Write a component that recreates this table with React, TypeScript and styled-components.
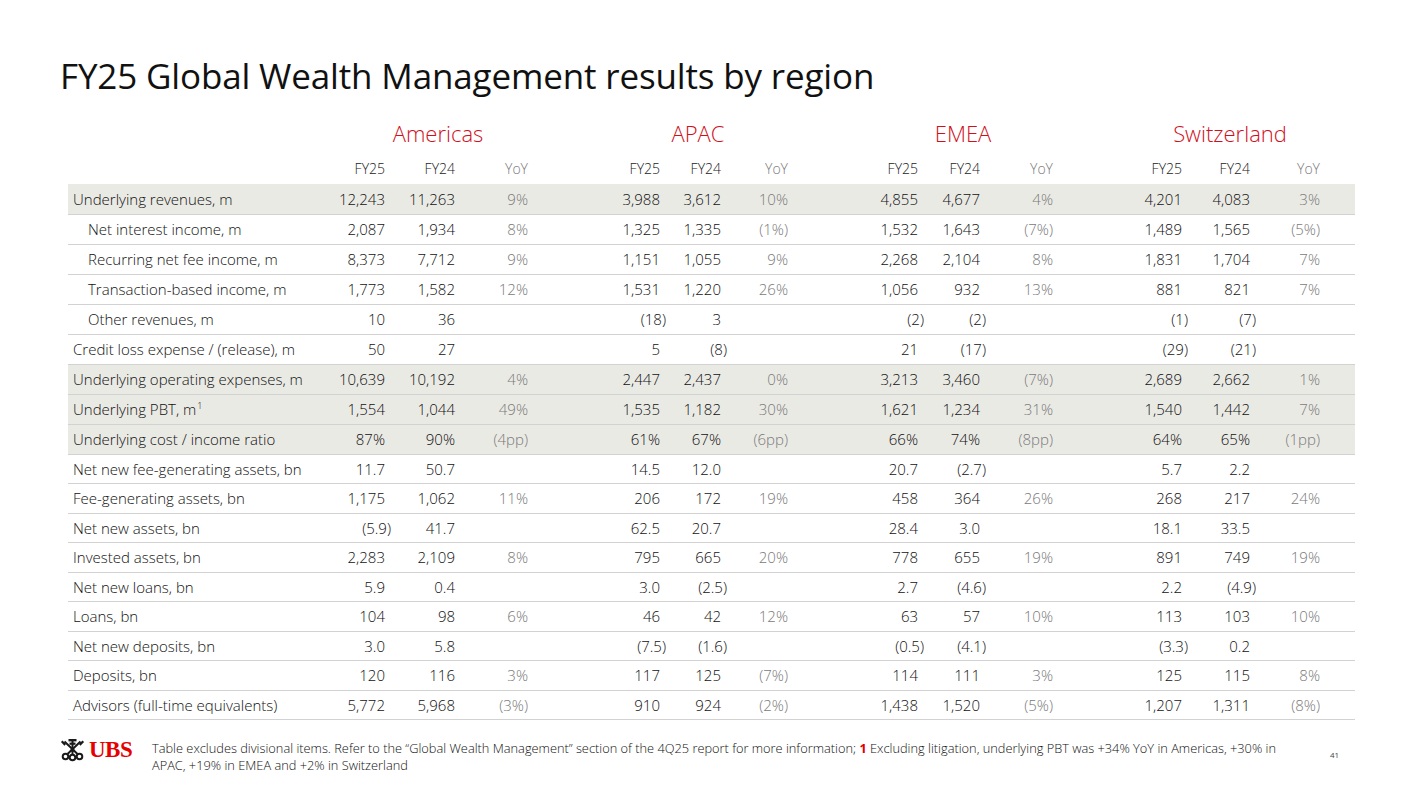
import styled, { createGlobalStyle } from "styled-components";

const GlobalStyle = createGlobalStyle`
  html, body {
    margin: 0;
    padding: 0;
    background: #ffffff;
  }
  body {
    font-family: "Open Sans", "Noto Sans", Arial, sans-serif;
    color: #1a1a1a;
  }
`;

const Page = styled.div`
  width: 1407px;
  height: 792px;
  box-sizing: border-box;
  padding: 54px 52px 0 60px;
  display: flex;
  flex-direction: column;
  overflow: hidden;
`;

const Title = styled.h1`
  margin: 0 0 20px 0;
  font-size: 35px;
  line-height: 44px;
  font-weight: 400;
  color: #111;
  letter-spacing: -0.15px;
`;

const Table = styled.table`
  margin-left: 8px;
  width: 1287px;
  border-collapse: collapse;
  table-layout: fixed;
  font-size: 15px;
  font-weight: 300;
`;

const RegionCell = styled.th`
  height: 28px;
  padding: 0 0 4px 0;
  text-align: right;
  font-weight: 400;
  vertical-align: middle;
`;

const RegionName = styled.span`
  display: inline-block;
  width: 180px;
  text-align: center;
  font-size: 22px;
  font-weight: 300;
  color: #d0101c;
`;

const HeadCell = styled.th<{ $muted?: boolean }>`
  height: 32px;
  padding: 0;
  text-align: right;
  font-weight: 300;
  font-size: 14px;
  color: ${({ $muted }) => ($muted ? "#7a7a7a" : "#222")};
`;

const Row = styled.tr<{ $shaded?: boolean; $tall?: boolean }>`
  height: ${({ $tall }) => ($tall ? "30px" : "29.5px")};
  background: ${({ $shaded }) => ($shaded ? "#eaeae5" : "transparent")};
  border-bottom: 1px solid #d2d2d2;
`;

const LabelCell = styled.td<{ $indent?: boolean }>`
  padding: 0 0 0 ${({ $indent }) => ($indent ? "20px" : "5px")};
  white-space: nowrap;
  color: #111;
`;

const ValueCell = styled.td<{ $muted?: boolean }>`
  padding: 0;
  text-align: right;
  white-space: nowrap;
  color: ${({ $muted }) => ($muted ? "#7a7a7a" : "#111")};
`;

const Hang = styled.span<{ $neg: boolean }>`
  margin-right: ${({ $neg }) => ($neg ? "-6px" : "0")};
`;

const Sup = styled.sup`
  font-size: 9px;
  line-height: 0;
  margin-left: 1px;
`;

const Footer = styled.div`
  margin-top: 17px;
  display: flex;
  align-items: flex-start;
`;

const Logo = styled.div`
  display: flex;
  align-items: center;
  gap: 4px;
  width: 92px;
  flex-shrink: 0;
  margin-top: 1px;
`;

const LogoText = styled.span`
  font-family: "Liberation Serif", "DejaVu Serif", serif;
  font-weight: 700;
  font-size: 23px;
  line-height: 22px;
  color: #e60000;
  letter-spacing: -0.5px;
`;

const Note = styled.p`
  margin: 3px 0 0 0;
  width: 1148px;
  font-size: 12.8px;
  line-height: 17px;
  font-weight: 300;
  color: #111;
`;

const NoteRef = styled.b`
  font-weight: 700;
  color: #e60000;
`;

const PageNumber = styled.span`
  margin: 12px 0 0 30px;
  font-size: 8px;
  color: #444;
`;

type Group = [string, string, string];

interface DataRow {
  label: string;
  indent?: boolean;
  shaded?: boolean;
  sup?: string;
  values: Group[];
}

const regions = ["Americas", "APAC", "EMEA", "Switzerland"];

// column widths, measured from the right edges of each figure column
const colWidths = [242, 75, 70, 73, 132, 61, 67, 130, 62, 73, 129, 68, 70, 35];

const rows: DataRow[] = [
  {
    label: "Underlying revenues, m",
    shaded: true,
    values: [
      ["12,243", "11,263", "9%"],
      ["3,988", "3,612", "10%"],
      ["4,855", "4,677", "4%"],
      ["4,201", "4,083", "3%"],
    ],
  },
  {
    label: "Net interest income, m",
    indent: true,
    values: [
      ["2,087", "1,934", "8%"],
      ["1,325", "1,335", "(1%)"],
      ["1,532", "1,643", "(7%)"],
      ["1,489", "1,565", "(5%)"],
    ],
  },
  {
    label: "Recurring net fee income, m",
    indent: true,
    values: [
      ["8,373", "7,712", "9%"],
      ["1,151", "1,055", "9%"],
      ["2,268", "2,104", "8%"],
      ["1,831", "1,704", "7%"],
    ],
  },
  {
    label: "Transaction-based income, m",
    indent: true,
    values: [
      ["1,773", "1,582", "12%"],
      ["1,531", "1,220", "26%"],
      ["1,056", "932", "13%"],
      ["881", "821", "7%"],
    ],
  },
  {
    label: "Other revenues, m",
    indent: true,
    values: [
      ["10", "36", ""],
      ["(18)", "3", ""],
      ["(2)", "(2)", ""],
      ["(1)", "(7)", ""],
    ],
  },
  {
    label: "Credit loss expense / (release), m",
    values: [
      ["50", "27", ""],
      ["5", "(8)", ""],
      ["21", "(17)", ""],
      ["(29)", "(21)", ""],
    ],
  },
  {
    label: "Underlying operating expenses, m",
    shaded: true,
    values: [
      ["10,639", "10,192", "4%"],
      ["2,447", "2,437", "0%"],
      ["3,213", "3,460", "(7%)"],
      ["2,689", "2,662", "1%"],
    ],
  },
  {
    label: "Underlying PBT, m",
    sup: "1",
    shaded: true,
    values: [
      ["1,554", "1,044", "49%"],
      ["1,535", "1,182", "30%"],
      ["1,621", "1,234", "31%"],
      ["1,540", "1,442", "7%"],
    ],
  },
  {
    label: "Underlying cost / income ratio",
    shaded: true,
    values: [
      ["87%", "90%", "(4pp)"],
      ["61%", "67%", "(6pp)"],
      ["66%", "74%", "(8pp)"],
      ["64%", "65%", "(1pp)"],
    ],
  },
  {
    label: "Net new fee-generating assets, bn",
    values: [
      ["11.7", "50.7", ""],
      ["14.5", "12.0", ""],
      ["20.7", "(2.7)", ""],
      ["5.7", "2.2", ""],
    ],
  },
  {
    label: "Fee-generating assets, bn",
    values: [
      ["1,175", "1,062", "11%"],
      ["206", "172", "19%"],
      ["458", "364", "26%"],
      ["268", "217", "24%"],
    ],
  },
  {
    label: "Net new assets, bn",
    values: [
      ["(5.9)", "41.7", ""],
      ["62.5", "20.7", ""],
      ["28.4", "3.0", ""],
      ["18.1", "33.5", ""],
    ],
  },
  {
    label: "Invested assets, bn",
    values: [
      ["2,283", "2,109", "8%"],
      ["795", "665", "20%"],
      ["778", "655", "19%"],
      ["891", "749", "19%"],
    ],
  },
  {
    label: "Net new loans, bn",
    values: [
      ["5.9", "0.4", ""],
      ["3.0", "(2.5)", ""],
      ["2.7", "(4.6)", ""],
      ["2.2", "(4.9)", ""],
    ],
  },
  {
    label: "Loans, bn",
    values: [
      ["104", "98", "6%"],
      ["46", "42", "12%"],
      ["63", "57", "10%"],
      ["113", "103", "10%"],
    ],
  },
  {
    label: "Net new deposits, bn",
    values: [
      ["3.0", "5.8", ""],
      ["(7.5)", "(1.6)", ""],
      ["(0.5)", "(4.1)", ""],
      ["(3.3)", "0.2", ""],
    ],
  },
  {
    label: "Deposits, bn",
    values: [
      ["120", "116", "3%"],
      ["117", "125", "(7%)"],
      ["114", "111", "3%"],
      ["125", "115", "8%"],
    ],
  },
  {
    label: "Advisors (full-time equivalents)",
    values: [
      ["5,772", "5,968", "(3%)"],
      ["910", "924", "(2%)"],
      ["1,438", "1,520", "(5%)"],
      ["1,207", "1,311", "(8%)"],
    ],
  },
];

function Figure({ value }: { value: string }) {
  return <Hang $neg={value.startsWith("(")}>{value}</Hang>;
}

// three crossed keys: bits at the top, round bows at the bottom
function KeysMark() {
  return (
    <svg width="25" height="24" viewBox="0 0 25 24" aria-hidden="true">
      <g stroke="#1a1a1a" strokeWidth="2" fill="none" strokeLinecap="butt">
        <line x1="12.5" y1="1" x2="12.5" y2="16" />
        <line x1="4.5" y1="3.5" x2="17.5" y2="16" />
        <line x1="20.5" y1="3.5" x2="7.5" y2="16" />
        <circle cx="12.5" cy="19.5" r="2.8" />
        <circle cx="5.5" cy="18.5" r="2.8" />
        <circle cx="19.5" cy="18.5" r="2.8" />
      </g>
      <g fill="#1a1a1a">
        <rect x="8.5" y="1" width="8" height="2.4" />
        <rect x="9.5" y="4.6" width="6" height="2.2" />
        <rect x="1" y="4" width="5" height="2.2" transform="rotate(45 3.5 5.1)" />
        <rect x="19" y="4" width="5" height="2.2" transform="rotate(-45 21.5 5.1)" />
        <circle cx="12.5" cy="12" r="2" />
      </g>
    </svg>
  );
}

export default function App() {
  return (
    <Page>
      <GlobalStyle />
      <Title>FY25 Global Wealth Management results by region</Title>

      <Table>
        <colgroup>
          {colWidths.map((w, i) => (
            <col key={i} style={{ width: w }} />
          ))}
        </colgroup>
        <thead>
          <tr>
            <RegionCell />
            {regions.map((r) => (
              <RegionCell key={r} colSpan={3}>
                <RegionName>{r}</RegionName>
              </RegionCell>
            ))}
            <RegionCell />
          </tr>
          <tr>
            <HeadCell />
            {regions.map((r) => [
              <HeadCell key={r + "25"}>FY25</HeadCell>,
              <HeadCell key={r + "24"}>FY24</HeadCell>,
              <HeadCell key={r + "yoy"} $muted>
                YoY
              </HeadCell>,
            ])}
            <HeadCell />
          </tr>
        </thead>
        <tbody>
          {rows.map((row, i) => (
            <Row key={row.label} $shaded={row.shaded} $tall={i < 9}>
              <LabelCell $indent={row.indent}>
                {row.label}
                {row.sup && <Sup>{row.sup}</Sup>}
              </LabelCell>
              {row.values.map((g, j) => [
                <ValueCell key={j + "a"}>
                  <Figure value={g[0]} />
                </ValueCell>,
                <ValueCell key={j + "b"}>
                  <Figure value={g[1]} />
                </ValueCell>,
                <ValueCell key={j + "c"} $muted>
                  {g[2]}
                </ValueCell>,
              ])}
              <ValueCell />
            </Row>
          ))}
        </tbody>
      </Table>

      <Footer>
        <Logo>
          <KeysMark />
          <LogoText>UBS</LogoText>
        </Logo>
        <Note>
          Table excludes divisional items. Refer to the “Global Wealth Management” section of the
          4Q25 report for more information; <NoteRef>1</NoteRef> Excluding litigation, underlying
          PBT was +34% YoY in Americas, +30% in APAC, +19% in EMEA and +2% in Switzerland
        </Note>
        <PageNumber>41</PageNumber>
      </Footer>
    </Page>
  );
}
